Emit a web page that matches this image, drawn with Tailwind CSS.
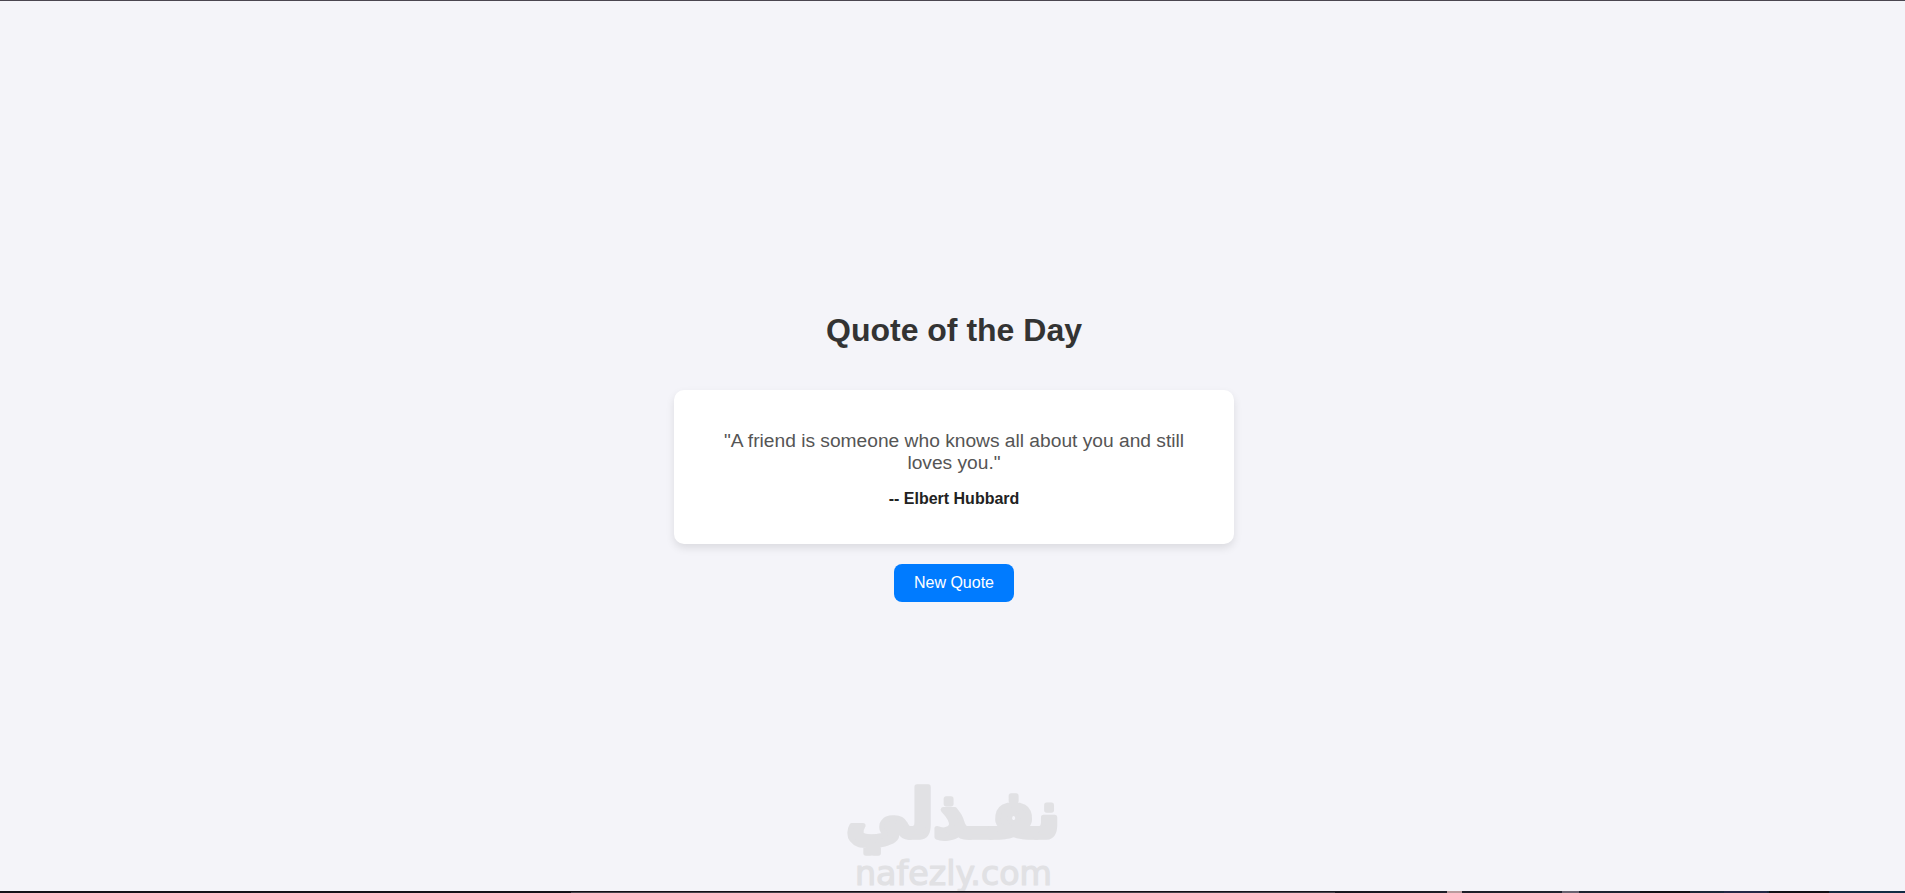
<!DOCTYPE html>
<html lang="en">

<head>
    <meta charset="UTF-8">
    <title>Quote of the Day</title>
    <script src="https://cdn.jsdelivr.net/npm/@tailwindcss/browser@4"></script>
</head>

<body class="bg-[#f4f4f9] font-['Liberation_Sans',Arial,sans-serif]">
    <div class="relative flex flex-col h-screen overflow-hidden border-t border-[#4a4650]">
        <main class="flex-1 flex flex-col items-center pt-[311px] pl-[3px]">
            <h1 class="text-[32px] leading-9 font-bold text-[#333]">Quote of the Day</h1>
            <div class="mt-[42px] w-[560px] h-[154px] px-10 pt-10 bg-white rounded-[10px] shadow-[0_4px_8px_rgba(0,0,0,0.1)] text-center">
                <p id="quote" class="text-[19.2px] leading-[22px] text-[#555]">"A friend is someone who knows all about you and still loves you."</p>
                <p id="author" class="mt-4 text-base leading-[18px] font-bold text-[#222]">-- Elbert Hubbard</p>
            </div>
            <button class="mt-5 h-[38px] px-5 bg-[#007bff] rounded-lg text-base leading-[18px] text-white cursor-pointer">New Quote</button>
        </main>

        <!-- watermark -->
        <svg class="absolute left-[830px] top-[769px] w-[250px] h-[123px] pointer-events-none" viewBox="0 0 250 123" fill="#e1e1e4" stroke="#e1e1e4" stroke-linejoin="round">
            <text x="123" y="67" text-anchor="middle" direction="rtl" textLength="214" lengthAdjust="spacingAndGlyphs" font-family="DejaVu Sans" font-weight="700" font-size="66" stroke-width="5.5">نفـذلي</text>
            <text x="25" y="115" textLength="197" lengthAdjust="spacingAndGlyphs" font-family="DejaVu Sans" font-size="33" stroke-width="1.2">nafezly.com</text>
        </svg>

        <footer class="relative h-0.5 bg-linear-to-r from-[#141118] from-65% via-[#20222c] via-80% to-[#102c44]">
            <div class="absolute left-[571px] top-px w-[764px] h-px bg-[#454149]"></div>
            <div class="absolute left-[1447px] top-0 w-[15px] h-0.5 bg-[#b79a9c]"></div>
            <div class="absolute left-[1562px] top-0 w-[17px] h-0.5 bg-[#686270]"></div>
            <div class="absolute left-[1640px] top-0 w-[50px] h-0.5 bg-[#111014]"></div>
            <div class="absolute left-[1724px] top-0 w-[43px] h-0.5 bg-[#242846]"></div>
            <div class="absolute left-[1769px] top-0 w-[60px] h-0.5 bg-[#100f14]"></div>
        </footer>
    </div>
</body>

</html>
